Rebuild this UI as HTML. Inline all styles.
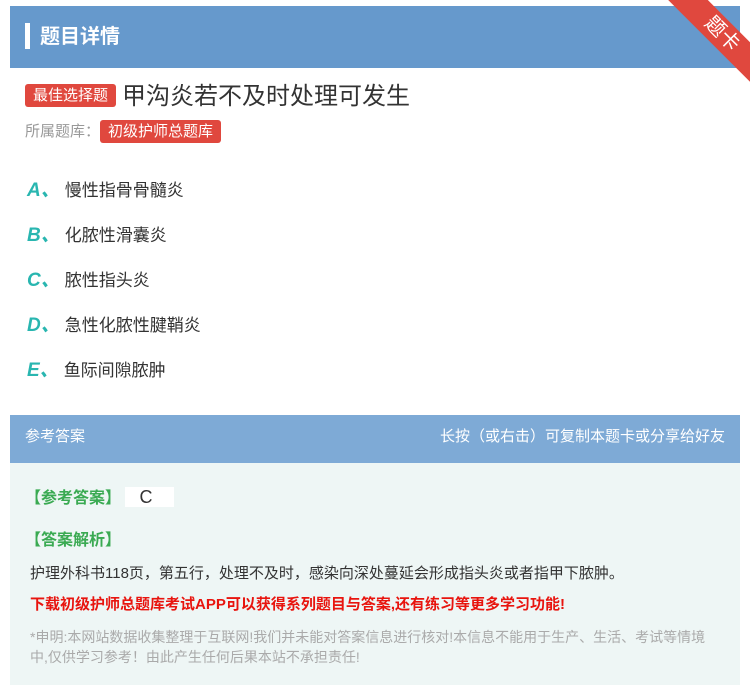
<!DOCTYPE html>
<html><head><meta charset="utf-8"><style>
*{margin:0;padding:0;box-sizing:border-box}
body{width:750px;height:685px;background:#fff;font-family:"Liberation Sans","Noto Sans CJK SC",sans-serif;position:relative;overflow:hidden}
.hdr{position:absolute;left:10px;top:6px;width:730px;height:62px;background:#6699cc}
.hdr .bar{position:absolute;left:15px;top:17px;width:5px;height:26px;background:#fff}
.hdr .t{position:absolute;left:30px;top:14px;color:#fff;font-size:20px;font-weight:bold}
.rib{position:absolute;width:140px;height:28px;background:#e0483e;transform:rotate(45deg);color:#fff;text-align:center;font-size:20px;line-height:28px;right:-42px;top:20px}
.tag{display:inline-block;background:#e0483e;color:#fff;border-radius:3px;font-size:15px;padding:0 8px;height:23px;line-height:23px}
.q{position:absolute;left:25px;top:76px;font-size:24px;color:#333}
.q .tag{vertical-align:4px;margin-right:6px}
.lib{position:absolute;left:25px;top:120px;font-size:15px;color:#999}
.opt{position:absolute;left:27px;font-size:17px;color:#333}
.opt b{color:#29b6b0;font-style:italic;font-size:19px;margin-right:5px}
.ah{position:absolute;left:10px;top:415px;width:730px;height:48px;background:#7eaad6;color:#fff;font-size:15px;line-height:44px;padding:0 15px}
.ah span{float:right}
.ab{position:absolute;left:10px;top:463px;width:730px;height:222px;background:#eef6f5}
.g{color:#3aaa52;font-size:16px;font-weight:bold;position:absolute;left:15px}
.txt{position:absolute;left:20px;font-size:15px;color:#333}
.red{position:absolute;left:20px;font-size:15px;color:#e8140e;font-weight:bold}
.note{position:absolute;left:20px;width:690px;font-size:14px;color:#aaa;line-height:20px}
</style></head><body>
<div class="hdr"><div class="bar"></div><div class="t">题目详情</div></div>
<div class="rib">题卡</div>
<div class="q"><span class="tag">最佳选择题</span>甲沟炎若不及时处理可发生</div>
<div class="lib">所属题库：<span class="tag">初级护师总题库</span></div>
<div class="opt" style="top:175px"><b>A、</b>慢性指骨骨髓炎</div>
<div class="opt" style="top:220px"><b>B、</b>化脓性滑囊炎</div>
<div class="opt" style="top:265px"><b>C、</b>脓性指头炎</div>
<div class="opt" style="top:310px"><b>D、</b>急性化脓性腱鞘炎</div>
<div class="opt" style="top:355px"><b>E、</b>鱼际间隙脓肿</div>
<div class="ah">参考答案<span>长按（或右击）可复制本题卡或分享给好友</span></div>
<div class="ab">
<div class="g" style="top:21px">【参考答案】 <span style="color:#333;font-weight:normal;background:#fff;padding:0 22px 0 14px;font-size:18px">C</span></div>
<div class="g" style="top:63px">【答案解析】</div>
<div class="txt" style="top:99px">护理外科书118页，第五行，处理不及时，感染向深处蔓延会形成指头炎或者指甲下脓肿。</div>
<div class="red" style="top:130px">下载初级护师总题库考试APP可以获得系列题目与答案,还有练习等更多学习功能!</div>
<div class="note" style="top:164px">*申明:本网站数据收集整理于互联网!我们并未能对答案信息进行核对!本信息不能用于生产、生活、考试等情境中,仅供学习参考！由此产生任何后果本站不承担责任!</div>
</div>
</body></html>
